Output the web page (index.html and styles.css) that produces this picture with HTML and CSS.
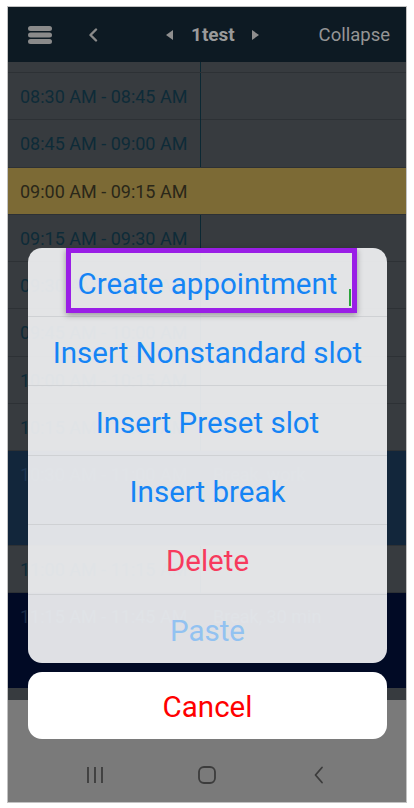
FILE: index.html
```html
<!DOCTYPE html>
<html lang="en">
<head>
    <meta charset="UTF-8">
    <meta name="viewport" content="width=device-width, initial-scale=1.0">
    <title>Schedule - 1test</title>
    <link rel="stylesheet" href="styles.css">
</head>
<body>
    <div class="screen">
        <header class="topbar">
            <button class="icon menu" aria-label="Menu">
                <svg width="24" height="18" viewBox="0 0 24 18">
                    <rect x="0" y="0" width="24" height="5" rx="2.5"/>
                    <rect x="0" y="6.5" width="24" height="5" rx="2.5"/>
                    <rect x="0" y="13" width="24" height="5" rx="2.5"/>
                </svg>
            </button>
            <button class="icon back" aria-label="Back">
                <svg width="10" height="14" viewBox="0 0 10 14">
                    <path d="M8 1.5 L2.5 7 L8 12.5" fill="none" stroke-width="2.4" stroke-linecap="round" stroke-linejoin="round"/>
                </svg>
            </button>
            <div class="title">
                <svg class="tri" width="8" height="10" viewBox="0 0 8 10"><path d="M7 0 L7 10 L0 5 Z"/></svg>
                <span>1test</span>
                <svg class="tri" width="8" height="10" viewBox="0 0 8 10"><path d="M1 0 L1 10 L8 5 Z"/></svg>
            </div>
            <span class="collapse">Collapse</span>
        </header>

        <div class="schedule">
            <div class="slot stub"><span class="time"></span><span class="note"></span></div>
            <div class="slot"><span class="time">08:30 AM - 08:45 AM</span><span class="note"></span></div>
            <div class="slot"><span class="time">08:45 AM - 09:00 AM</span><span class="note"></span></div>
            <div class="slot current"><span class="time">09:00 AM - 09:15 AM</span><span class="note"></span></div>
            <div class="slot"><span class="time">09:15 AM - 09:30 AM</span><span class="note"></span></div>
            <div class="slot"><span class="time">09:30 AM - 09:45 AM</span><span class="note"></span></div>
            <div class="slot"><span class="time">09:45 AM - 10:00 AM</span><span class="note"></span></div>
            <div class="slot"><span class="time">10:00 AM - 10:15 AM</span><span class="note"></span></div>
            <div class="slot"><span class="time">10:15 AM - 10:30 AM</span><span class="note"></span></div>
            <div class="slot double work"><span class="time">10:30 AM - 11:00 AM</span><span class="note">Break, work</span></div>
            <div class="slot"><span class="time">11:00 AM - 11:15 AM</span><span class="note"></span></div>
            <div class="slot double pause"><span class="time">11:15 AM - 11:45 AM</span><span class="note">Break, 30 min</span></div>
            <div class="slot tail"><span class="time"></span><span class="note"></span></div>
        </div>

        <div class="app-bottom"></div>

        <nav class="sysnav">
            <span class="nav-item">
                <svg width="18" height="18" viewBox="0 0 18 18">
                    <path d="M2 1 V17 M9 1 V17 M16 1 V17" fill="none" stroke-width="1.8"/>
                </svg>
            </span>
            <span class="nav-item">
                <svg width="18" height="18" viewBox="0 0 18 18">
                    <rect x="1" y="1" width="16" height="16" rx="5" fill="none" stroke-width="1.8"/>
                </svg>
            </span>
            <span class="nav-item">
                <svg width="12" height="18" viewBox="0 0 12 18">
                    <path d="M9 1.5 L2.5 9 L9 16.5" fill="none" stroke-width="1.8" stroke-linecap="round" stroke-linejoin="round"/>
                </svg>
            </span>
        </nav>

        <div class="sheet-layer">
            <ul class="sheet">
                <li class="action">Create appointment</li>
                <li class="action">Insert Nonstandard slot</li>
                <li class="action">Insert Preset slot</li>
                <li class="action">Insert break</li>
                <li class="action danger">Delete</li>
                <li class="action disabled">Paste</li>
            </ul>
            <button class="cancel">Cancel</button>
            <div class="focus-box"><span class="caret"></span></div>
        </div>
    </div>
</body>
</html>
```

FILE: styles.css
```css
* {
    box-sizing: border-box;
}

body {
    margin: 0;
    background: #ffffff;
    font-family: Roboto, "Noto Sans", Arial, sans-serif;
}

.screen {
    position: relative;
    margin: 6px 0 0 7px;
    width: 400px;
    height: 797px;
    border: 1px solid #c2c2c2;
    background: #7a7a7a;
    overflow: hidden;
    display: flex;
    flex-direction: column;
}

/* top bar */
.topbar {
    height: 55px;
    flex-shrink: 0;
    background: #0d1a23;
    display: flex;
    align-items: center;
    padding: 0 16px 0 20px;
}

.icon {
    background: none;
    border: none;
    padding: 0;
    display: flex;
}

.icon svg {
    fill: #8a8a8a;
    stroke: #8a8a8a;
}

.menu svg {
    stroke: none;
}

.back {
    margin-left: 36px;
}

.title {
    margin-left: 68px;
    display: flex;
    align-items: center;
    color: #9a9a9a;
    font-size: 19px;
    font-weight: bold;
}

.title span {
    margin: 0 16px 0 17px;
}

.tri {
    fill: #8f8f8f;
}

.collapse {
    margin-left: auto;
    color: #959595;
    font-size: 18.5px;
}

/* schedule */
.schedule {
    flex-shrink: 0;
}

.slot {
    display: grid;
    grid-template-columns: 192px 1fr;
    height: 47.3px;
    background: #373b3f;
    border-bottom: 1px solid #2d3135;
    font-size: 18px;
    color: #0e2b38;
}

.slot .time {
    padding-left: 12px;
    line-height: 47px;
}

.slot .note {
    border-left: 1px solid #0b2833;
    padding-left: 12px;
    line-height: 47px;
}

.slot.stub {
    height: 11px;
}

.slot.tail {
    height: 12px;
    border-bottom: none;
}

.slot.double {
    height: 94.6px;
}

.slot.current {
    background: #7c6a35;
    color: #2a2719;
}

.slot.current .note,
.slot.work .note,
.slot.pause .note {
    border-left-color: transparent;
}

.slot.work {
    background: #12263b;
    color: #1d3550;
}

.slot.pause {
    background: #010a25;
    border-bottom-color: #010a25;
    color: #1a2a45;
}

.app-bottom {
    height: 50px;
    flex-shrink: 0;
}

/* android navigation */
.sysnav {
    flex: 1;
    display: flex;
    justify-content: center;
    align-items: center;
    gap: 52px;
    padding-bottom: 2px;
}

.nav-item {
    width: 60px;
    display: flex;
    justify-content: center;
}

.nav-item svg {
    stroke: #3c3c3c;
}

/* action sheet */
.sheet-layer {
    position: absolute;
    left: 20px;
    top: 241px;
    width: 359px;
}

.sheet {
    list-style: none;
    margin: 0;
    padding: 0;
    border-radius: 14px;
    overflow: hidden;
    background: rgba(240, 241, 243, 0.93);
}

.action {
    height: 69.4px;
    padding-top: 4px;
    display: flex;
    align-items: center;
    justify-content: center;
    font-size: 29.5px;
    color: #1584f5;
    border-top: 1px solid #cfd1d4;
}

.action:first-child {
    border-top: none;
    height: 68px;
}

.action.danger {
    color: #f73a5d;
}

.action.disabled {
    color: #92c2f1;
}

.cancel {
    display: block;
    width: 100%;
    margin-top: 9px;
    height: 67px;
    padding: 3px 0 0;
    border: none;
    border-radius: 14px;
    background: #ffffff;
    color: #ff0000;
    font-family: inherit;
    font-size: 29.5px;
}

/* annotation highlight */
.focus-box {
    position: absolute;
    left: 38px;
    top: 0;
    width: 291px;
    height: 65px;
    border: 5px solid #9a1ee6;
    box-shadow: 0 2px 6px rgba(0, 0, 0, 0.35);
}

.caret {
    position: absolute;
    right: 1px;
    top: 36px;
    width: 2px;
    height: 17px;
    background: #2ba33b;
}
```
